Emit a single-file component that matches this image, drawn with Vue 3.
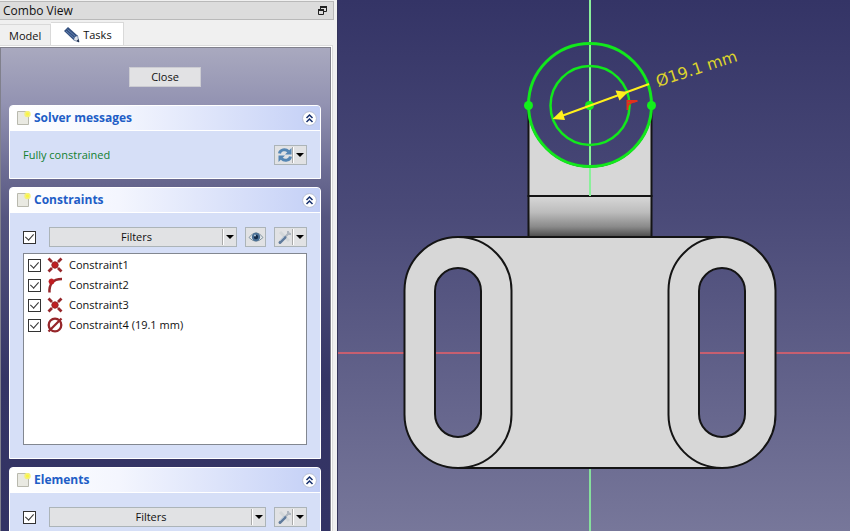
<script setup>
import { ref } from 'vue';

const allConstraints = ref(true);
const allElements = ref(true);

const constraints = ref([
  { name: 'Constraint1', icon: 'coincident', active: true },
  { name: 'Constraint2', icon: 'tangent', active: true },
  { name: 'Constraint3', icon: 'coincident', active: true },
  { name: 'Constraint4 (19.1 mm)', icon: 'diameter', active: true },
]);

const open = ref({ solver: true, constraints: true, elements: true });

const sections = [
  { id: 'solver', title: 'Solver messages' },
  { id: 'constraints', title: 'Constraints' },
  { id: 'elements', title: 'Elements' },
];

const toggle = (id) => {
  open.value[id] = !open.value[id];
};
</script>

<template>
  <div class="window">
    <aside class="combo">
      <header class="dock-title">
        <span>Combo View</span>
        <button class="float-btn" type="button" aria-label="Float">
          <svg width="9" height="9" viewBox="0 0 9 9" fill="none" stroke="#222">
            <path d="M2.5 3V.5h6v5H6" />
            <path d="M2 1h7M0 4h6" stroke-width="2" />
            <path d="M.5 3.5h5v5h-5z" />
          </svg>
        </button>
      </header>

      <nav class="tabs">
        <button class="tab" type="button">Model</button>
        <button class="tab active" type="button">
          <svg width="16" height="16" viewBox="0 0 16 16">
            <path d="M0 4 4 0l9.500 8.500-4 4.500z" fill="#34507f" />
            <path d="m2 4 8.500 7.500M3.500 2.500 12 10" stroke="#6483b4" />
            <path d="m9.500 13 1-3 3-1.500 1.500 6.500z" fill="#dfe3ea" stroke="#34507f" stroke-width=".6" />
            <path d="m12.500 14 2-2 .7 3.200z" fill="#182848" />
          </svg>
          Tasks
        </button>
      </nav>

      <main class="tasks">
        <button class="close-btn" type="button">Close</button>

        <section v-for="s in sections" :key="s.id" class="panel">
          <h2 class="panel-head">
            <svg class="sheet" width="14" height="14" viewBox="0 0 14 14">
              <path d="M.5.5h11v13H.5z" fill="#e9e9e2" stroke="#b9b9ae" />
              <circle cx="10.500" cy="3" r="3.200" fill="#f4f07a" />
              <circle cx="10.500" cy="3" r="1.500" fill="#fbf63c" />
            </svg>
            <span>{{ s.title }}</span>
            <button class="fold" type="button" :aria-label="s.title" @click="toggle(s.id)">
              <svg width="15" height="15" viewBox="0 0 15 15" fill="none">
                <circle cx="7.500" cy="7.500" r="6.900" fill="#fff" stroke="#b4bdd4" />
                <path d="m4.500 7 3-3 3 3M4.500 11l3-3 3 3" stroke="#16306e" stroke-width="1.500" />
              </svg>
            </button>
          </h2>

          <div v-if="open[s.id]" class="panel-body">
            <div v-if="s.id === 'solver'" class="row">
              <span class="status">Fully constrained</span>
              <button class="tool split" type="button" aria-label="Update">
                <svg width="16" height="16" viewBox="0 0 16 16" fill="none">
                  <path d="M2.500 6.500C3 2.500 8.500 1.500 11.500 4.500" stroke="#5586b4" stroke-width="3" />
                  <path d="M14.500 1v6.500H8z" fill="#5586b4" />
                  <path d="M13.500 9.500C13 13.500 7.500 14.500 4.500 11.500" stroke="#5586b4" stroke-width="3" />
                  <path d="M1.500 15V8.500H8z" fill="#5586b4" />
                </svg>
                <i class="arrow"></i>
              </button>
            </div>

            <template v-if="s.id === 'constraints'">
              <div class="row">
                <input v-model="allConstraints" class="check lead" type="checkbox" aria-label="All constraints" />
                <button class="tool filter" type="button"><span>Filters</span><i class="arrow"></i></button>
                <button class="tool eye" type="button" aria-label="Visibility">
                  <svg width="16" height="14" viewBox="0 0 16 14">
                    <path d="M1 7.500Q8-2 15 7.500 8 15 1 7.500z" fill="#e6ebee" stroke="#7f919d" />
                    <circle cx="8" cy="7" r="4.200" fill="#4a7096" />
                    <circle cx="8" cy="7" r="2.200" fill="#132b48" />
                    <circle cx="7" cy="5.500" r="1" fill="#b9cede" />
                  </svg>
                </button>
                <button class="tool split" type="button" aria-label="Constraint settings">
                  <svg width="16" height="16" viewBox="0 0 16 16" fill="none">
                    <path d="m3 3 9 9" stroke="#d3d7d9" stroke-width="3" />
                    <path d="m8 8 4.500-4.500M11 2v3h3" stroke="#aeb6bf" stroke-width="2" />
                    <path d="M3 13.500 8 8.500" stroke="#607b9c" stroke-width="3" stroke-linecap="round" />
                    <path d="M3 12 7.500 7.500" stroke="#a4b9d0" />
                  </svg>
                  <i class="arrow"></i>
                </button>
              </div>

              <ul class="list">
                <li v-for="c in constraints" :key="c.name">
                  <label>
                    <input v-model="c.active" class="check" type="checkbox" />
                    <svg width="16" height="16" viewBox="0 0 16 16" fill="none" stroke="#96262a">
                      <template v-if="c.icon === 'coincident'">
                        <path d="m1.500 1.500 3.500 3.500M14.500 1.500 11 5M1.500 14.500 5 11M14.500 14.500 11 11" stroke-width="2.800" />
                        <circle cx="8" cy="8" r="3.200" fill="#c01c20" />
                      </template>
                      <template v-else-if="c.icon === 'tangent'">
                        <path d="M2.500 15.500C2 8 5 2 15 2" stroke-width="2.500" />
                        <circle cx="4.500" cy="4.500" r="2.500" fill="#c01c20" stroke="#c01c20" />
                      </template>
                      <template v-else>
                        <circle cx="8" cy="8" r="6.300" stroke-width="2.300" />
                        <path d="M1.500 14.500 14.500 1.500" stroke-width="2.300" />
                      </template>
                    </svg>
                    <span>{{ c.name }}</span>
                  </label>
                </li>
              </ul>
            </template>

            <template v-if="s.id === 'elements'">
              <div class="row">
                <input v-model="allElements" class="check lead" type="checkbox" aria-label="All elements" />
                <button class="tool filter" type="button"><span>Filters</span><i class="arrow"></i></button>
                <button class="tool split" type="button" aria-label="Element settings">
                  <svg width="16" height="16" viewBox="0 0 16 16" fill="none">
                    <path d="m3 3 9 9" stroke="#d3d7d9" stroke-width="3" />
                    <path d="m8 8 4.500-4.500M11 2v3h3" stroke="#aeb6bf" stroke-width="2" />
                    <path d="M3 13.500 8 8.500" stroke="#607b9c" stroke-width="3" stroke-linecap="round" />
                    <path d="M3 12 7.500 7.500" stroke="#a4b9d0" />
                  </svg>
                  <i class="arrow"></i>
                </button>
              </div>
              <ul class="list"></ul>
            </template>
          </div>
        </section>
      </main>
    </aside>

    <div class="view">
      <svg class="scene" viewBox="338 0 512 531" preserveAspectRatio="xMidYMid slice">
        <defs>
          <linearGradient id="fillet" x1="0" y1="0" x2="0" y2="1">
            <stop offset="0" stop-color="#d8d8d8" />
            <stop offset=".4" stop-color="#bcbcbc" />
            <stop offset=".75" stop-color="#8a8a8a" />
            <stop offset="1" stop-color="#4a4a4a" />
          </linearGradient>
        </defs>

        <!-- axes -->
        <path d="M0 353H1200" stroke="#c65f70" stroke-width="2" />
        <path d="M590 468V900" stroke="#86df9c" stroke-width="2" />

        <!-- part -->
        <g stroke="#141414" stroke-width="2" fill="#d7d7d7">
          <path d="M528.500 196h123v41h-123z" fill="url(#fillet)" />
          <path d="M528.500 105A61.500 61.500 0 0 0 651.500 105V196H528.500z" />
          <path
            fill-rule="evenodd"
            d="M458 237H722A53.500 53.500 0 0 1 775.500 290.500V414A53.500 53.500 0 0 1 722 468H458A53.500 53.500 0 0 1 404.500 414V290.500A53.500 53.500 0 0 1 458 237z
              M458 268A23 23 0 0 0 435 291V414A23 23 0 0 0 481 414V291A23 23 0 0 0 458 268z
              M722 268A23 23 0 0 0 699 291V414A23 23 0 0 0 745 414V291A23 23 0 0 0 722 268z"
          />
          <path d="M458 237A53.500 53.500 0 0 1 511.500 290.500V414A53.500 53.500 0 0 1 458 468" fill="none" />
          <path d="M722 237A53.500 53.500 0 0 0 668.500 290.500V414A53.500 53.500 0 0 0 722 468" fill="none" />
        </g>

        <!-- sketch -->
        <path d="M590 0V196" stroke="#8af09a" stroke-width="2" />
        <g fill="none" stroke="#12e81c">
          <circle cx="590" cy="105" r="61.500" stroke-width="3" />
          <circle cx="590" cy="105.500" r="39.500" stroke-width="2.500" />
        </g>
        <g fill="#12f01c">
          <circle cx="528.500" cy="105.500" r="4.500" />
          <circle cx="651.500" cy="105.500" r="4.500" />
          <circle cx="589.500" cy="105.500" r="4.500" />
        </g>
        <path d="M627.500 110V101h10M627.500 107q1-5 8-5.500" fill="none" stroke="#e0301c" stroke-width="2" />
        <path d="M556 118 649 84" stroke="#fff01c" stroke-width="2" />
        <path d="m552.500 119 9.500-9 3 10zM628 92l-12.500-1.500 4 10z" fill="#fff01c" />
        <text transform="translate(658 87) rotate(-18)" class="dim">Ø19.1 mm</text>
      </svg>
    </div>
  </div>
</template>

<style>
body {
  margin: 0;
}
</style>

<style scoped>
.window {
  display: flex;
  height: 100vh;
  overflow: hidden;
  background: #f0f0f0;
  color: #111;
  font: 11px/16px "Open Sans", "Noto Sans", sans-serif;
}

button {
  margin: 0;
  padding: 0;
  font: inherit;
  color: inherit;
  border: 0;
  background: none;
}

.combo {
  flex: 0 0 337px;
  box-sizing: border-box;
  display: flex;
  flex-direction: column;
  padding: 1px 3px 0 0;
}

.dock-title {
  display: flex;
  align-items: center;
  justify-content: space-between;
  height: 17px;
  padding: 0 6px 0 3px;
  background: #dcdcdc;
  border: 1px solid #b9b9b9;
  border-left: 0;
  font-size: 12px;
}

.float-btn {
  display: flex;
}

.tabs {
  display: flex;
  align-items: flex-end;
  height: 26px;
}

.tab {
  height: 22px;
  padding: 0 9px;
  background: #f0f0f0;
  border: 1px solid #d9d9d9;
  border-left: 0;
  border-bottom: 0;
}

.tab.active {
  display: flex;
  align-items: center;
  gap: 3px;
  height: 24px;
  padding: 0 11px 0 13px;
  background: #fff;
}

.tasks {
  flex: 1;
  min-height: 0;
  overflow: hidden;
  display: flex;
  flex-direction: column;
  gap: 8px;
  margin: 1px 3px 0 0;
  padding: 19px 9px 0 8px;
  border: 1px solid #80808c;
  border-bottom: 0;
  box-shadow: 0 0 0 1px #fff, 0 0 0 2px #dcdcdc;
  background: linear-gradient(#a9a9bf 0, #9393b2 55px, #6d6d94 120px, #55557f 170px, #353565 330px, #333364 100%);
}

.close-btn {
  align-self: center;
  flex: none;
  width: 72px;
  height: 20px;
  margin-bottom: 10px;
  background: #e2e2e4;
  border: 1px solid #ccccd2;
}

.panel {
  flex: none;
  border: 1px solid #fff;
  border-radius: 4px 4px 0 0;
  background: #d6dff7;
}

.panel-head {
  display: flex;
  align-items: center;
  gap: 3px;
  height: 24px;
  margin: 0;
  padding: 0 3px 0 7px;
  border-bottom: 1px solid #fff;
  border-radius: 3px 3px 0 0;
  background: linear-gradient(90deg, #fff, #f4f6fe 35%, #c4d0f6);
  color: #215dc6;
  font-size: 12px;
  font-weight: 700;
}

.panel-head span {
  flex: 1;
}

.fold {
  display: flex;
}

.panel-body {
  padding: 14px 13px 13px;
}

.row {
  display: flex;
  align-items: center;
  gap: 8px;
}

.status {
  flex: 1;
  color: #108030;
}

.check {
  appearance: none;
  flex: none;
  box-sizing: border-box;
  display: flex;
  justify-content: center;
  width: 13px;
  height: 13px;
  margin: 0;
  border: 1px solid #333;
  background: #fff;
}

.check:checked::after {
  content: "";
  width: 4px;
  height: 7px;
  border: solid #333;
  border-width: 0 1px 1px 0;
  transform: rotate(42deg);
}

.lead {
  margin-right: 5px;
}

.tool {
  box-sizing: border-box;
  display: flex;
  align-items: center;
  justify-content: center;
  height: 20px;
  background: #e1e2e4;
  border: 1px solid #acb4b8;
}

.filter {
  flex: 1;
}

.filter span {
  flex: 1;
}

.eye {
  width: 21px;
}

.split {
  width: 33px;
  justify-content: space-between;
  padding-left: 2px;
}

.arrow {
  display: flex;
  align-items: center;
  justify-content: center;
  width: 12px;
  height: 16px;
  border-left: 1px solid #fff;
  box-shadow: -1px 0 #aaa;
}

.arrow::before {
  content: "";
  border: 4px solid transparent;
  border-top-color: #000;
  border-bottom: 0;
}

.list {
  height: 188px;
  margin: 6px 0 0;
  padding: 1px 4px;
  list-style: none;
  background: #fff;
  border: 1px solid #828790;
}

.list label {
  display: flex;
  align-items: center;
  gap: 6px;
  height: 20px;
}

.view {
  flex: 1;
  min-width: 0;
  border-left: 1px solid #33335a;
  background: linear-gradient(#343466, #4a4a78 40%, #77779a);
}

.scene {
  display: block;
  width: 100%;
  height: 100%;
}

.dim {
  font: 16px "DejaVu Sans", sans-serif;
  fill: #ddd32c;
}
</style>
